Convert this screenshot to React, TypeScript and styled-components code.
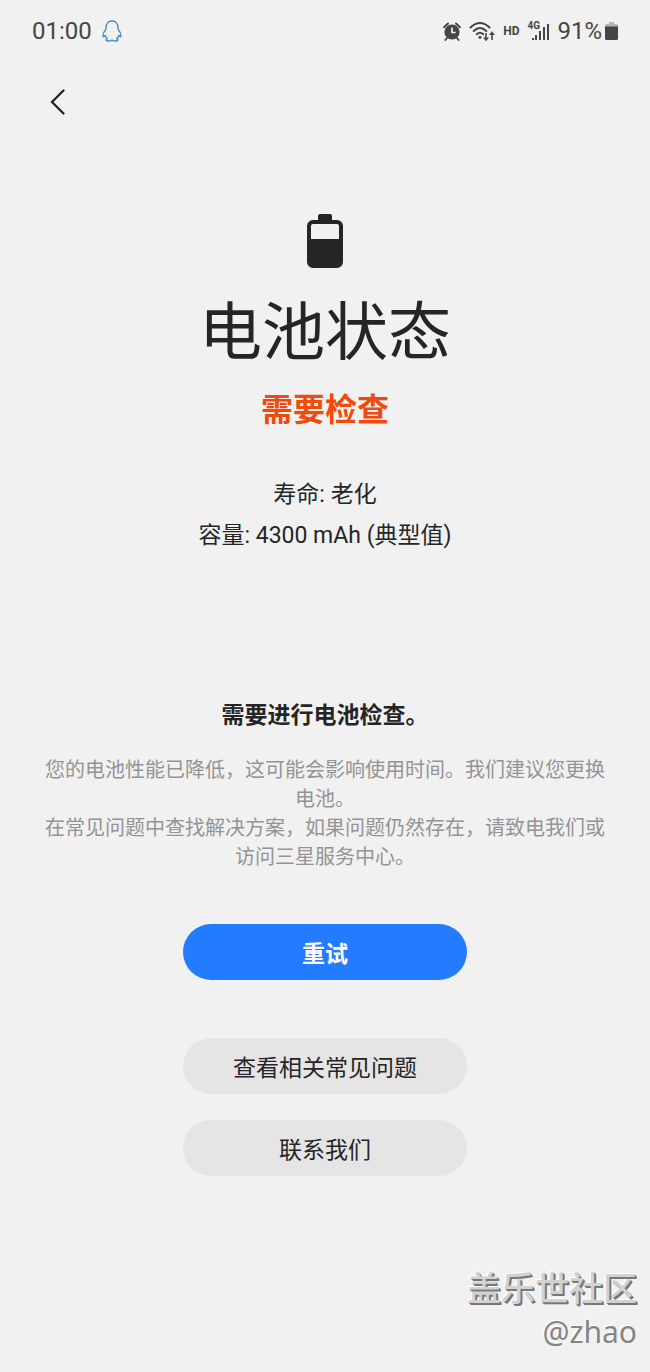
import React from 'react';
import styled, { createGlobalStyle } from 'styled-components';

const GlobalStyle = createGlobalStyle`
  *, *::before, *::after { box-sizing: border-box; }
  body {
    margin: 0;
    background: #f1f1f1;
    color: #252525;
    font-family: Roboto, "Noto Sans CJK SC", sans-serif;
  }
  h1, h2, p { margin: 0; }
`;

const Screen = styled.div`
  display: flex;
  flex-direction: column;
  min-height: 100vh;
`;

const StatusBar = styled.header`
  display: flex;
  align-items: center;
  justify-content: space-between;
  height: 62px;
  padding: 0 32px;
  color: #454545;
  font-size: 24px;
  line-height: 28px;
`;

const StatusGroup = styled.div<{ $gap: number }>`
  display: flex;
  align-items: center;
  gap: ${({ $gap }) => $gap}px;
`;

const HdLabel = styled.span`
  font-size: 12px;
  font-weight: 700;
`;

const Signal = styled.span`
  position: relative;
  display: flex;
  width: 22px;
`;

const NetworkLabel = styled.span`
  position: absolute;
  top: 0;
  left: 0;
  font-size: 10px;
  font-weight: 700;
  line-height: 10px;
`;

const Level = styled.span`
  display: flex;
  align-items: center;
  gap: 3px;
`;

const Toolbar = styled.nav`
  display: flex;
  align-items: center;
  height: 80px;
  padding: 0 38px;
`;

const BackButton = styled.button`
  display: flex;
  align-items: center;
  justify-content: center;
  width: 40px;
  height: 40px;
  padding: 0;
  border: 0;
  background: transparent;
  color: inherit;
  cursor: pointer;
`;

const Main = styled.main`
  display: flex;
  flex-direction: column;
  align-items: center;
  padding: 72px 44px 0;
  text-align: center;
`;

const Title = styled.h1`
  margin-top: 20px;
  font-size: 63px;
  font-weight: 400;
  line-height: 90px;
`;

const Status = styled.p`
  margin-top: 8px;
  color: #f04a0c;
  font-size: 32px;
  font-weight: 700;
  line-height: 48px;
`;

const Facts = styled.div`
  margin-top: 40px;
  font-size: 23px;
  line-height: 41px;
`;

const Notice = styled.section`
  margin-top: 142px;
`;

const NoticeTitle = styled.h2`
  font-size: 23px;
  font-weight: 700;
  line-height: 36px;
`;

const NoticeText = styled.p`
  color: #949494;
  font-size: 20px;
  line-height: 29px;
`;

const NoticeBody = styled.div`
  margin-top: 22px;
`;

const Actions = styled.div`
  display: flex;
  flex-direction: column;
  align-items: center;
  gap: 26px;
  margin-top: 52px;
`;

const PillButton = styled.button<{ $primary?: boolean }>`
  width: 284px;
  height: 56px;
  margin-bottom: ${({ $primary }) => ($primary ? 32 : 0)}px;
  padding: 0;
  border: 0;
  border-radius: 28px;
  background: ${({ $primary }) => ($primary ? '#237bff' : '#e5e5e5')};
  color: ${({ $primary }) => ($primary ? '#ffffff' : '#252525')};
  font-family: inherit;
  font-size: 23px;
  font-weight: ${({ $primary }) => ($primary ? 700 : 400)};
  cursor: pointer;
`;

const Watermark = styled.footer`
  display: flex;
  flex-direction: column;
  align-items: flex-end;
  margin-top: auto;
  padding: 0 13px 18px;
  font-family: "Noto Sans CJK SC", sans-serif;
`;

const Community = styled.span`
  color: #d2d2d2;
  font-size: 34px;
  font-weight: 500;
  line-height: 46px;
  text-shadow: 1px 1px 0 #777777, 2px 2px 0 #777777, -1px -1px 0 #ffffff;
`;

const Author = styled.span`
  color: #858585;
  font-family: "Noto Sans", sans-serif;
  font-size: 30px;
  line-height: 44px;
  text-shadow: -1px -1px 0 #ffffff;
`;

const PenguinIcon = () => (
  <svg width="20" height="22" viewBox="0 0 20 22" fill="none" stroke="#3d86c0" strokeWidth="1.3" strokeLinejoin="round" aria-hidden="true">
    <path d="M10 1C6.2 1 4 3.8 4 7.3v1.5C2.5 10.8 1 13 1 15.6c0 1.6.8 1.7 2.3-.2.4 1.4 1 2.4 2 3.2-2 .8-1.8 2.4.7 2.4 1.7 0 3-.3 4-1.1 1 .8 2.3 1.1 4 1.1 2.5 0 2.7-1.6.7-2.4 1-.8 1.600-1.800 2-3.200 1.500 1.900 2.300 1.800 2.300.2 0-2.600-1.500-4.800-3-6.800V7.300C16 3.800 13.800 1 10 1z" />
  </svg>
);

const AlarmIcon = () => (
  <svg width="18" height="19" viewBox="0 0 18 19" aria-hidden="true">
    <circle cx="9" cy="10" r="7.6" fill="#454545" />
    <path d="M1 5.200 5 1.500M17 5.200 13 1.500M4 16l-1.600 2M14 16l1.600 2" stroke="#454545" strokeWidth="1.9" strokeLinecap="round" />
    <path d="M9 5.500V10.500H12.600" fill="none" stroke="#f1f1f1" strokeWidth="1.7" />
  </svg>
);

const WifiIcon = () => (
  <svg width="26" height="21" viewBox="0 0 26 21" fill="none" stroke="#454545" aria-hidden="true">
    <g strokeWidth="2" strokeLinecap="round">
      <path d="M1.500 6.500Q11 -2.500 20.500 6.500" />
      <path d="M4.700 10Q11 4 17.300 10" />
      <path d="M7.800 13.300Q11 10.300 14.200 13.300" />
    </g>
    <circle cx="11" cy="16.300" r="1.5" fill="#454545" stroke="none" />
    <path d="M17 12v6M23 19v-6" strokeWidth="1.6" />
    <path d="M14 16.500h6l-3 3.700zM20 14h6l-3-3.700z" fill="#454545" stroke="none" />
  </svg>
);

const SignalIcon = () => (
  <svg width="22" height="20" viewBox="0 0 22 20" fill="#454545" aria-hidden="true">
    <rect x="5" y="17" width="2" height="2" />
    <rect x="8" y="14" width="2" height="5" />
    <rect x="12" y="10" width="2" height="9" />
    <rect x="16" y="6" width="2" height="13" />
    <rect x="20" y="3" width="2" height="16" />
  </svg>
);

const SmallBatteryIcon = () => (
  <svg width="13" height="20" viewBox="0 0 13 20" aria-hidden="true">
    <path d="M4 1h5v2h2.500A1.500 1.500 0 0 1 13 4.500V6H0V4.500A1.500 1.500 0 0 1 1.500 3H4z" fill="#b5b5b5" />
    <path d="M0 5.500h13v12a1.500 1.500 0 0 1-1.500 1.500h-10A1.500 1.500 0 0 1 0 17.500z" fill="#454545" />
  </svg>
);

const BackIcon = () => (
  <svg width="16" height="26" viewBox="0 0 16 26" fill="none" stroke="#202020" strokeWidth="2.2" strokeLinecap="round" aria-hidden="true">
    <path d="M13.500 1.500 2 13l11.500 11.500" />
  </svg>
);

const BatteryIcon = () => (
  <svg width="36" height="54" viewBox="0 0 36 54" aria-hidden="true">
    <path
      d="M13 0h10a2 2 0 0 1 2 2v4h5a6 6 0 0 1 6 6v36a6 6 0 0 1-6 6H6a6 6 0 0 1-6-6V12a6 6 0 0 1 6-6h5V2a2 2 0 0 1 2-2zM6 10a2 2 0 0 0-2 2v13h28V12a2 2 0 0 0-2-2z"
      fill="#252525"
      fillRule="evenodd"
    />
  </svg>
);

export default function App() {
  return (
    <>
      <GlobalStyle />
      <Screen>
        <StatusBar>
          <StatusGroup $gap={10}>
            <span>01:00</span>
            <PenguinIcon />
          </StatusGroup>
          <StatusGroup $gap={8}>
            <AlarmIcon />
            <WifiIcon />
            <HdLabel>HD</HdLabel>
            <Signal>
              <NetworkLabel>4G</NetworkLabel>
              <SignalIcon />
            </Signal>
            <Level>
              91%
              <SmallBatteryIcon />
            </Level>
          </StatusGroup>
        </StatusBar>
        <Toolbar>
          <BackButton type="button" aria-label="返回">
            <BackIcon />
          </BackButton>
        </Toolbar>
        <Main>
          <BatteryIcon />
          <Title>电池状态</Title>
          <Status>需要检查</Status>
          <Facts>
            <p>寿命: 老化</p>
            <p>容量: 4300 mAh (典型值)</p>
          </Facts>
          <Notice>
            <NoticeTitle>需要进行电池检查。</NoticeTitle>
            <NoticeBody>
              <NoticeText>您的电池性能已降低，这可能会影响使用时间。我们建议您更换电池。</NoticeText>
              <NoticeText>在常见问题中查找解决方案，如果问题仍然存在，请致电我们或访问三星服务中心。</NoticeText>
            </NoticeBody>
          </Notice>
          <Actions>
            <PillButton type="button" $primary>重试</PillButton>
            <PillButton type="button">查看相关常见问题</PillButton>
            <PillButton type="button">联系我们</PillButton>
          </Actions>
        </Main>
        <Watermark>
          <Community>盖乐世社区</Community>
          <Author>@zhao</Author>
        </Watermark>
      </Screen>
    </>
  );
}
